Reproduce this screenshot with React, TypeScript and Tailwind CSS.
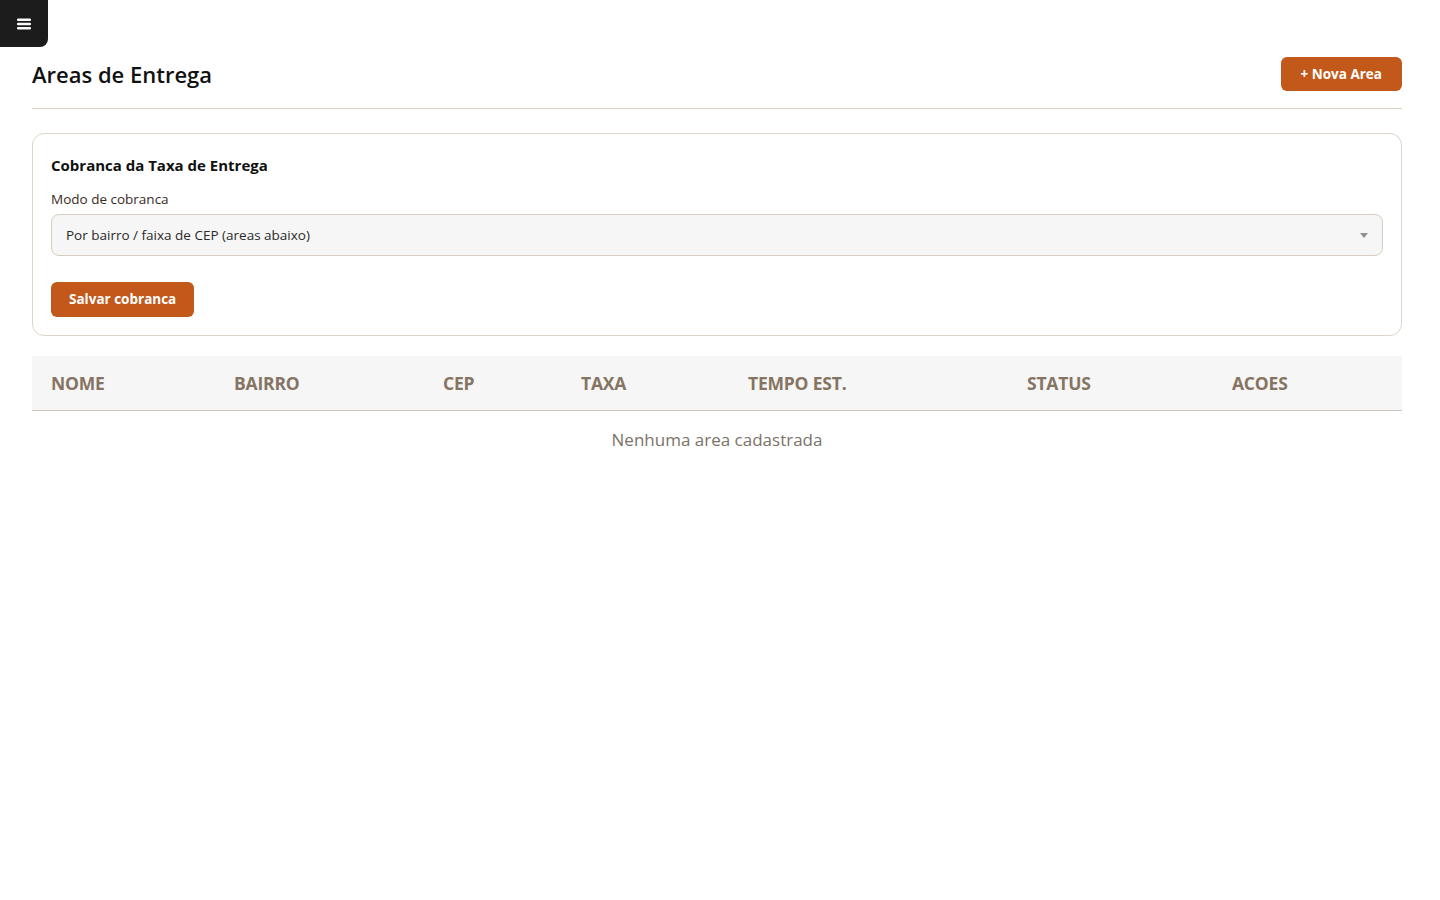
import { useState } from "react";

const columns = ["Nome", "Bairro", "CEP", "Taxa", "Tempo est.", "Status", "Acoes"];

export default function App() {
  const [mode, setMode] = useState("bairro");

  return (
    <div className="relative min-h-screen bg-white font-['Open_Sans',sans-serif] text-[#1a1a1a]">
      {/* Menu toggle pinned in the corner */}
      <button className="absolute left-0 top-0 flex h-[47px] w-[48px] items-center justify-center rounded-br-lg bg-[#1c1c1c]">
        <svg width="16" height="14" viewBox="0 0 16 14" fill="none">
          <rect x="1" y="1.5" width="14" height="2.4" rx="1" fill="white" />
          <rect x="1" y="5.8" width="14" height="2.4" rx="1" fill="white" />
          <rect x="1" y="10.1" width="14" height="2.4" rx="1" fill="white" />
        </svg>
      </button>

      <div className="pl-8 pr-[38px] pt-[57px]">
        <div className="flex items-center justify-between border-b border-[#d9d1c2] pb-[17px]">
          <h1 className="text-[22px] font-semibold leading-[34px] text-[#111]">Areas de Entrega</h1>
          <button className="h-[34px] rounded-md bg-[#c2591b] px-5 text-[13.5px] font-bold text-white">
            + Nova Area
          </button>
        </div>

        <section className="mt-6 rounded-xl border border-[#ddd5c7] px-[18px] pb-[18px] pt-[20px]">
          <h2 className="text-[15px] font-bold leading-[22px] text-[#111]">Cobranca da Taxa de Entrega</h2>
          <label className="mt-[13px] block text-[13.5px] leading-[20px] text-[#3a2a1e]">Modo de cobranca</label>
          <div className="relative mt-[5px]">
            <select
              value={mode}
              onChange={(e) => setMode(e.target.value)}
              className="h-[42px] w-full appearance-none rounded-lg border border-[#d8cebf] bg-[#f6f6f6] px-[14px] text-[13.5px] text-[#2a2a2a] outline-none"
            >
              <option value="bairro">Por bairro / faixa de CEP (areas abaixo)</option>
              <option value="fixa">Taxa fixa</option>
              <option value="km">Por distancia (km)</option>
            </select>
            <svg className="pointer-events-none absolute right-[15px] top-[19px]" width="8" height="5" viewBox="0 0 8 5">
              <path d="M0 0h8L4 5z" fill="#8f8f8f" />
            </svg>
          </div>
          <button className="mt-[26px] h-[35px] rounded-md bg-[#c2591b] px-[18px] text-[13.5px] font-bold text-white">
            Salvar cobranca
          </button>
        </section>

        <div className="mt-5">
          <div className="grid h-[55px] grid-cols-[183px_209px_138px_167px_279px_205px_1fr] items-center border-b border-[#cfc6bb] bg-[#f6f6f6]">
            {columns.map((c) => (
              <div key={c} className="px-[19px] text-[17.5px] font-bold uppercase tracking-[-0.2px] text-[#867462]">
                {c}
              </div>
            ))}
          </div>
          <p className="pt-[16px] text-center text-[17px] text-[#7b7268]">Nenhuma area cadastrada</p>
        </div>
      </div>
    </div>
  );
}
